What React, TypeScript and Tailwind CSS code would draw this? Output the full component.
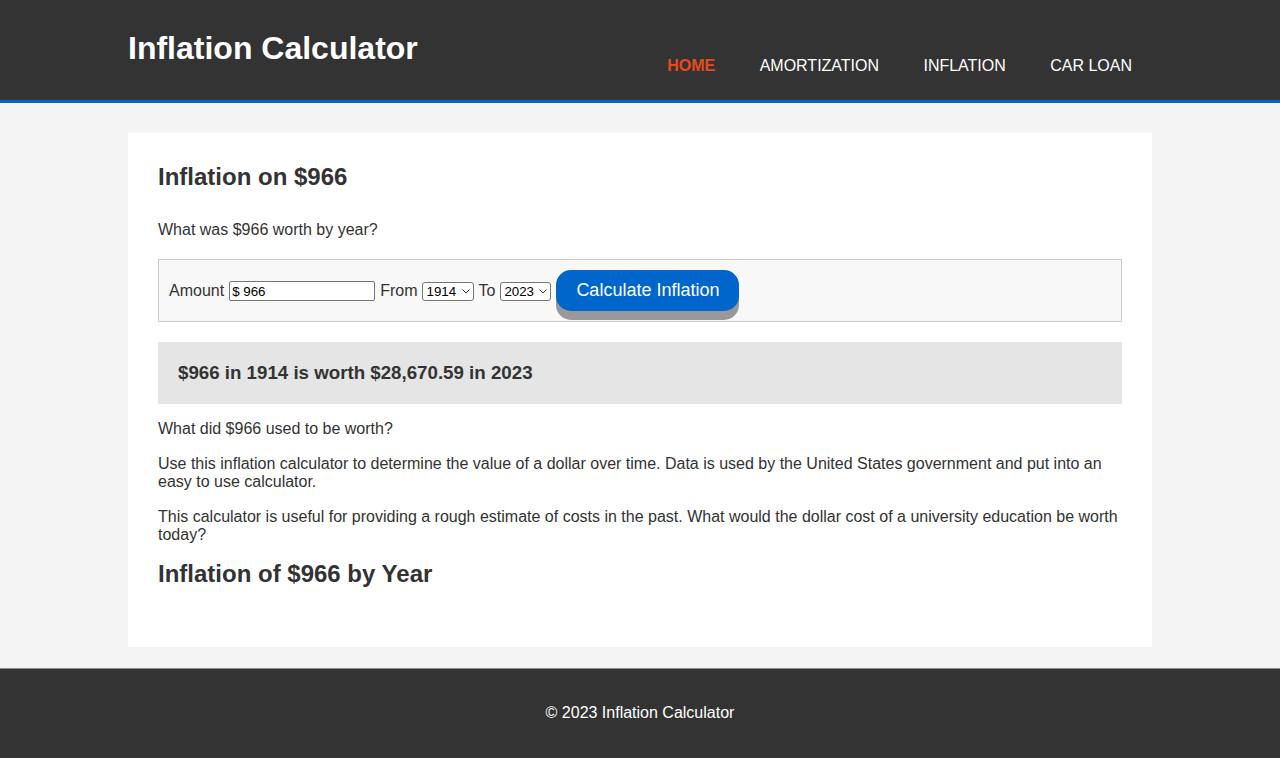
import React from "react";

function Select({ value, w }: { value: string; w: string }) {
  return (
    <span className={`relative ml-[5px] inline-flex ${w}`}>
      <select
        className="appearance-none w-full h-[19px] border border-[#767676] rounded-[3px] pl-[3px] text-[13.33px] leading-[17px] text-black bg-white"
        defaultValue={value}
      >
        <option>{value}</option>
      </select>
      <svg
        className="absolute right-[4px] top-[7px] pointer-events-none"
        width="8"
        height="5"
        viewBox="0 0 8 5"
        fill="none"
      >
        <path d="M0.5 0.5 L4 4 L7.5 0.5" stroke="#333" strokeWidth="1" />
      </svg>
    </span>
  );
}

export default function App() {
  const font = { fontFamily: '"Liberation Sans", Arial, sans-serif' };
  return (
    <div className="min-h-screen bg-[#f4f4f4] text-[#333333] text-[16px] leading-[1.15] flex flex-col" style={font}>
      <header className="bg-[#333333] border-b-[3px] border-[#0066cc] h-[103px]">
        <div className="w-[1024px] mx-auto flex justify-between">
          <h1 className="text-white font-bold text-[32px] leading-[1.15] mt-[30px]">Inflation Calculator</h1>
          <nav className="flex gap-[4.4px] mt-[57px] h-[19px] uppercase text-[16px] pr-[0px]">
            <a className="px-[20px] text-[#e8491d] font-bold">Home</a>
            <a className="px-[20px] text-white">Amortization</a>
            <a className="px-[20px] text-white">Inflation</a>
            <a className="px-[20px] text-white">Car Loan</a>
          </nav>
        </div>
      </header>
      <main className="pt-[30px] pb-[21px]">
        <div className="w-[1024px] mx-auto bg-white p-[30px]">
          <h2 className="text-[24px] font-bold leading-[1.15] mb-[30px]">Inflation on $966</h2>
          <p className="mb-[20px]">What was $966 worth by year?</p>
          <div className="bg-[#f8f8f8] border border-[#cccccc] p-[10px] flex items-center">
            <span className="mt-[2px]">Amount</span>
            <input
              className="ml-[5px] w-[146px] h-[20px] mt-[2px] border border-[#767676] rounded-[2px] px-[2px] text-[13.33px] text-black bg-white"
              defaultValue="$ 966"
            />
            <span className="ml-[5px] mt-[2px]">From</span>
            <Select value="1914" w="w-[52px] mt-[2px]" />
            <span className="ml-[4px] mt-[2px]">To</span>
            <Select value="2023" w="w-[51px] mt-[2px]" />
            <button className="ml-[5px] bg-[#0066cc] text-white text-[18px] leading-[21px] py-[10px] px-[20px] rounded-[15px] shadow-[0_9px_0_#999999]">
              Calculate Inflation
            </button>
          </div>
          <div className="bg-[#e5e5e5] py-[20px] px-[20px] mt-[20px]">
            <h3 className="text-[18.72px] font-bold leading-[1.15]">$966 in 1914 is worth $28,670.59 in 2023</h3>
          </div>
          <p className="mt-[16px]">What did $966 used to be worth?</p>
          <p className="mt-[17px]">
            Use this inflation calculator to determine the value of a dollar over time. Data is used by the United States government and put into an easy to use calculator.
          </p>
          <p className="mt-[16px]">
            This calculator is useful for providing a rough estimate of costs in the past. What would the dollar cost of a university education be worth today?
          </p>
          <h2 className="text-[24px] font-bold leading-[1.15] mt-[16px] mb-[29px]">Inflation of $966 by Year</h2>
        </div>
      </main>
      <footer className="bg-[#333333] border-t border-[#8a8a8a] text-white text-center py-[35px] flex-1">
        <p>© 2023 Inflation Calculator</p>
      </footer>
    </div>
  );
}
